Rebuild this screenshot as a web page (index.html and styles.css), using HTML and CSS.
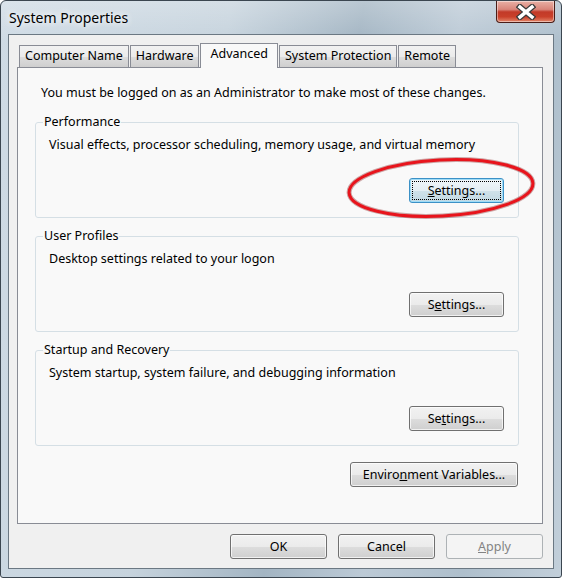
FILE: index.html
```html
<!DOCTYPE html>
<html lang="en">
<head>
    <meta charset="UTF-8">
    <meta name="viewport" content="width=device-width, initial-scale=1.0">
    <title>System Properties</title>
    <link rel="stylesheet" href="styles.css">
</head>
<body>
    <div class="window">
        <div class="titlebar">
            <span class="title">System Properties</span>
            <div class="close-btn">
                <svg width="20" height="16" viewBox="0 0 20 16">
                    <path d="M4 3 L16 13 M16 3 L4 13" stroke="#3a3a3a" stroke-width="6" stroke-linecap="square" fill="none"/>
                    <path d="M4 3 L16 13 M16 3 L4 13" stroke="#fff" stroke-width="3.5" stroke-linecap="square" fill="none"/>
                </svg>
            </div>
        </div>

        <div class="client">
            <div class="tabstrip">
                <div class="tab">Computer Name</div>
                <div class="tab">Hardware</div>
                <div class="tab selected">Advanced</div>
                <div class="tab">System Protection</div>
                <div class="tab">Remote</div>
            </div>

            <div class="tab-page">
                <p class="notice">You must be logged on as an Administrator to make most of these changes.</p>

                <fieldset class="group">
                    <legend>Performance</legend>
                    <p class="group-desc">Visual effects, processor scheduling, memory usage, and virtual memory</p>
                    <div class="group-actions">
                        <button class="btn btn-settings focused"><u>S</u>ettings...</button>
                    </div>
                </fieldset>

                <fieldset class="group">
                    <legend>User Profiles</legend>
                    <p class="group-desc">Desktop settings related to your logon</p>
                    <div class="group-actions">
                        <button class="btn btn-settings">S<u>e</u>ttings...</button>
                    </div>
                </fieldset>

                <fieldset class="group">
                    <legend>Startup and Recovery</legend>
                    <p class="group-desc">System startup, system failure, and debugging information</p>
                    <div class="group-actions">
                        <button class="btn btn-settings">Se<u>t</u>tings...</button>
                    </div>
                </fieldset>

                <div class="env-row">
                    <button class="btn btn-env">Enviro<u>n</u>ment Variables...</button>
                </div>
            </div>

            <div class="dialog-buttons">
                <button class="btn btn-dialog">OK</button>
                <button class="btn btn-dialog">Cancel</button>
                <button class="btn btn-dialog" disabled><u>A</u>pply</button>
            </div>
        </div>

        <!-- red marker drawn over the dialog -->
        <svg class="highlight" width="562" height="578" viewBox="0 0 562 578">
            <ellipse cx="441" cy="188" rx="92" ry="28" transform="rotate(-3 441 188)" fill="none" stroke="#7a0808" stroke-width="5" opacity="0.35"/>
            <ellipse cx="441" cy="188" rx="92" ry="28" transform="rotate(-3 441 188)" fill="none" stroke="#e8141c" stroke-width="3"/>
        </svg>
    </div>
</body>
</html>
```

FILE: styles.css
```css
body {
    margin: 0;
    font-family: "Noto Sans", sans-serif;
    font-size: 12.5px;
    color: #000;
    background-color: #fff;
}
.window {
    position: relative;
    width: 562px;
    height: 578px;
    box-sizing: border-box;
    border: 1px solid #3b4650;
    border-radius: 6px 6px 3px 3px;
    background:
        linear-gradient(to bottom, rgba(255,255,255,0.25), rgba(255,255,255,0) 40px),
        linear-gradient(100deg, #cfdbe5 0%, #c6d3dd 35%, #a3b5c3 55%, #bccad6 70%, #aebfcc 85%, #c2cfda 100%);
    display: flex;
    flex-direction: column;
    overflow: hidden;
}
.titlebar {
    height: 33px;
    flex: none;
    display: flex;
    justify-content: space-between;
    align-items: flex-start;
}
.title {
    padding: 9px 0 0 8px;
    line-height: 16px;
    font-size: 14px;
    text-shadow: 0 0 6px #fff, 0 0 10px rgba(255,255,255,0.8);
}
.close-btn {
    width: 59px;
    height: 22px;
    margin-right: 6px;
    box-sizing: border-box;
    border: 1px solid #4a1d17;
    border-top: none;
    border-radius: 0 0 4px 4px;
    background: linear-gradient(#e9b0a5 0%, #d9857a 40%, #c23a28 52%, #c9402a 75%, #e3876a 100%);
    box-shadow: inset 0 0 0 1px rgba(255,255,255,0.45);
    display: flex;
    align-items: center;
    justify-content: center;
}
.client {
    flex: none;
    height: 535px;
    margin: 0 7px;
    box-sizing: border-box;
    border: 1px solid #6b7883;
    background-color: #f0f0f0;
    display: flex;
    flex-direction: column;
}
.tabstrip {
    display: flex;
    align-items: flex-end;
    gap: 1px;
    padding: 8px 0 0 10px;
}
.tab {
    height: 22px;
    box-sizing: border-box;
    padding: 0 5px;
    line-height: 20px;
    border: 1px solid #898c95;
    border-bottom: none;
    background: linear-gradient(#f2f2f2 0%, #ebebeb 50%, #dddddd 51%, #cfcfcf 100%);
    white-space: nowrap;
}
.tab.selected {
    position: relative;
    z-index: 1;
    height: 25px;
    margin-bottom: -1px;
    padding: 0 9px 3px;
    background: #f9f9f9;
}
.tab-page {
    margin-left: 8px;
    width: 526px;
    height: 457px;
    box-sizing: border-box;
    border: 1px solid #898c95;
    background-color: #f9f9f9;
    padding-top: 17px;
}
.notice {
    margin: 0 0 13px 23px;
    line-height: 16px;
}
.group {
    margin: 0 0 10px 17px;
    width: 484px;
    box-sizing: border-box;
    min-inline-size: 0;
    border: 1px solid #d5dfe5;
    border-radius: 3px;
    padding: 7px 14px 14px 0;
}
.group legend {
    margin-left: 7px;
    padding: 0 1px;
    line-height: 16px;
}
.group-desc {
    margin: 0 0 0 13px;
    line-height: 16px;
}
.group-actions {
    display: flex;
    justify-content: flex-end;
    margin-top: 25px;
}
.env-row {
    display: flex;
    justify-content: flex-end;
    margin-top: 16px;
    padding-right: 24px;
}
.dialog-buttons {
    display: flex;
    justify-content: flex-end;
    gap: 11px;
    margin-top: 10px;
    padding-right: 10px;
}
.btn {
    font: inherit;
    color: #000;
    height: 25px;
    box-sizing: border-box;
    padding: 0;
    border: 1px solid #707070;
    border-radius: 3px;
    background: linear-gradient(#f2f2f2 0%, #ebebeb 50%, #dddddd 51%, #cfcfcf 100%);
    box-shadow: inset 0 0 0 1px rgba(255,255,255,0.7);
}
.btn u {
    text-underline-offset: 1px;
}
.btn-settings {
    width: 95px;
}
.btn-env {
    width: 168px;
}
.btn-dialog {
    width: 97px;
}
.btn.focused {
    border-color: #3c91c6;
    background: linear-gradient(#f0f6f9 0%, #e4eef3 50%, #d0e2ea 51%, #c2d8e2 100%);
    box-shadow: inset 0 0 0 1px #9fdcf7;
    outline: 1px dotted #000;
    outline-offset: -4px;
}
.btn:disabled {
    color: #838383;
    border-color: #adb2b5;
    background: #f4f4f4;
    box-shadow: none;
}
.highlight {
    position: absolute;
    left: -1px;
    top: -1px;
    pointer-events: none;
}
```
